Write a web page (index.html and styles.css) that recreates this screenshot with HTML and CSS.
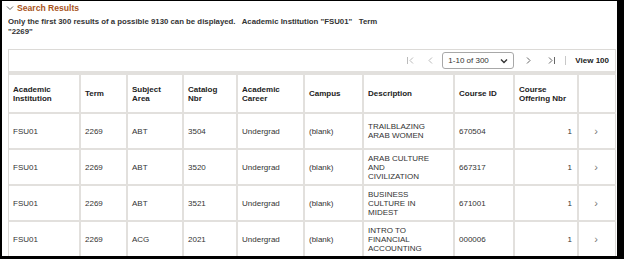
FILE: index.html
```html
<!DOCTYPE html>
<html>
<head>
<meta charset="utf-8">
<link rel="stylesheet" href="styles.css">
</head>
<body>
<div class="frame">
  <div class="group-head">
    <svg class="collapse" width="8" height="6" viewBox="0 0 8 6"><path d="M1 1.5 L4 4.5 L7 1.5" fill="none" stroke="#666" stroke-width="1"/></svg>
    <span class="group-title">Search Results</span>
  </div>
  <p class="msg">Only the first 300 results of a possible 9130 can be displayed.&nbsp;&nbsp; Academic Institution "FSU01"&nbsp;&nbsp; Term "2269"</p>
  <div class="grid-box">
    <div class="toolbar">
      <span class="nav first">
        <svg width="9" height="9" viewBox="0 0 9 9"><path d="M1.5 1 V8 M7 1.5 L4 4.5 L7 7.5" fill="none" stroke="#bbb" stroke-width="1"/></svg>
      </span>
      <span class="nav prev">
        <svg width="9" height="9" viewBox="0 0 9 9"><path d="M6 1.5 L3 4.5 L6 7.5" fill="none" stroke="#bbb" stroke-width="1"/></svg>
      </span>
      <span class="select">1-10 of 300
        <svg class="caret" width="8" height="6" viewBox="0 0 8 6"><path d="M1 1.5 L4 4.5 L7 1.5" fill="none" stroke="#333" stroke-width="1.4"/></svg>
      </span>
      <span class="nav next">
        <svg width="9" height="9" viewBox="0 0 9 9"><path d="M3 1.5 L6 4.5 L3 7.5" fill="none" stroke="#666" stroke-width="1"/></svg>
      </span>
      <span class="nav last">
        <svg width="9" height="9" viewBox="0 0 9 9"><path d="M2 1.5 L5 4.5 L2 7.5 M7.5 1 V8" fill="none" stroke="#666" stroke-width="1"/></svg>
      </span>
      <span class="sep"></span>
      <span class="view">View 100</span>
    </div>
    <table class="results">
      <colgroup>
        <col style="width:71px"><col style="width:47px"><col style="width:56px"><col style="width:54px"><col style="width:67px"><col style="width:59px"><col style="width:91px"><col style="width:60px"><col style="width:64px"><col style="width:38px">
      </colgroup>
      <thead>
        <tr>
          <th>Academic Institution</th><th>Term</th><th>Subject Area</th><th>Catalog Nbr</th><th>Academic Career</th><th>Campus</th><th>Description</th><th>Course ID</th><th>Course Offering Nbr</th><th></th>
        </tr>
      </thead>
      <tbody>
        <tr><td>FSU01</td><td>2269</td><td>ABT</td><td>3504</td><td>Undergrad</td><td>(blank)</td><td class="desc">TRAILBLAZING ARAB WOMEN</td><td>670504</td><td class="num">1</td><td class="go">&#x203A;</td></tr>
        <tr><td>FSU01</td><td>2269</td><td>ABT</td><td>3520</td><td>Undergrad</td><td>(blank)</td><td class="desc">ARAB CULTURE AND CIVILIZATION</td><td>667317</td><td class="num">1</td><td class="go">&#x203A;</td></tr>
        <tr><td>FSU01</td><td>2269</td><td>ABT</td><td>3521</td><td>Undergrad</td><td>(blank)</td><td class="desc">BUSINESS CULTURE IN MIDEST</td><td>671001</td><td class="num">1</td><td class="go">&#x203A;</td></tr>
        <tr><td>FSU01</td><td>2269</td><td>ACG</td><td>2021</td><td>Undergrad</td><td>(blank)</td><td class="desc">INTRO TO FINANCIAL ACCOUNTING</td><td>000006</td><td class="num">1</td><td class="go">&#x203A;</td></tr>
      </tbody>
    </table>
  </div>
</div>
</body>
</html>
```
FILE: styles.css
```css
html {
  background: #000;
}
body {
  margin: 0;
  padding: 1px 7px 0 2px;
  height: 259px;
  box-sizing: border-box;
  overflow: hidden;
  font-family: "Liberation Sans", Arial, sans-serif;
  color: #333;
}
.frame {
  background: #fff;
  height: 255px;
  overflow: hidden;
  padding: 0 0 0 6px;
  box-sizing: border-box;
}
.group-head {
  display: flex;
  align-items: center;
  height: 12px;
  padding-top: 1px;
  margin-left: -2px;
}
.collapse {
  margin-right: 3px;
}
.group-title {
  color: #a8541c;
  font-weight: bold;
  font-size: 8.6px;
}
.msg {
  margin: 3px 0 0 0;
  font-size: 7.8px;
  font-weight: bold;
  line-height: 10px;
  width: 372px;
  color: #333;
}
.grid-box {
  margin-top: 12px;
  border: 1px solid #dcdad7;
  border-bottom: none;
  width: 606px;
}
.toolbar {
  height: 21px;
  display: flex;
  align-items: center;
  justify-content: flex-end;
  padding-right: 6px;
  border-bottom: 2px solid #e2e0dd;
}
.nav {
  display: flex;
  align-items: center;
  width: 12px;
}
.nav.first { margin-right: 8px; }
.nav.prev { margin-right: 4px; }
.nav.next { margin-right: 11px; }
.nav.last { margin-right: 6px; }
.select {
  display: flex;
  align-items: center;
  justify-content: space-between;
  box-sizing: border-box;
  width: 72px;
  height: 17px;
  border: 1px solid #a8a8a8;
  border-radius: 3px;
  padding: 0 5px 0 5px;
  font-size: 8px;
  color: #333;
  margin-right: 10px;
}
.sep {
  width: 1px;
  height: 9px;
  background: #c8c8c8;
  margin-right: 9px;
}
.view {
  font-size: 8px;
  font-weight: bold;
  color: #222;
}
.results {
  border-collapse: collapse;
  table-layout: fixed;
  width: 606px;
  font-size: 8px;
}
.results th, .results td {
  border: 2px solid #e2e0dd;
  text-align: left;
  vertical-align: middle;
  padding: 0 4px;
  line-height: 9px;
}
.results tr > :first-child { border-left: none; }
.results tr > :last-child { border-right: none; }
.results thead tr { height: 39px; }
.results th {
  font-weight: bold;
  color: #222;
}
.results tbody tr { height: 36px; }
.results td { color: #333; }
.results td.desc { padding-right: 22px; }
.results td.num { text-align: right; padding-right: 5px; }
.results td.go { text-align: center; color: #777; font-size: 11px; padding-right: 7px; }
```
